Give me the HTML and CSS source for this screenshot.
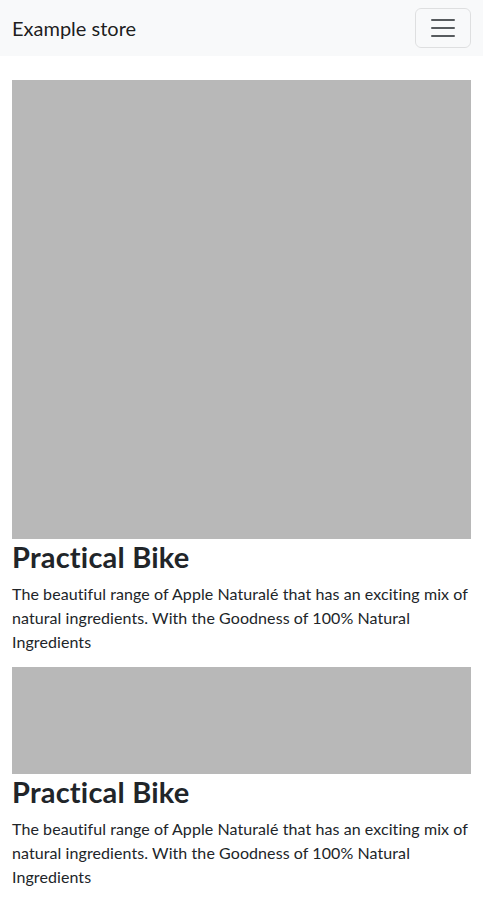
FILE: index.html
```html
<!DOCTYPE html>
<html lang="en">
<head>
<meta charset="utf-8">
<title>Example store</title>
<link rel="stylesheet" href="styles.css">
</head>
<body>
<nav class="navbar">
  <a class="brand" href="#">Example store</a>
  <button class="toggler" type="button" aria-label="Toggle navigation">
    <svg class="toggler-icon" viewBox="0 0 30 30" width="30" height="30" aria-hidden="true">
      <path d="M4 7h22M4 15h22M4 23h22" stroke="rgba(33,37,41,0.75)" stroke-width="2" stroke-linecap="round" stroke-miterlimit="10" fill="none"/>
    </svg>
  </button>
</nav>
<main class="container">
  <article class="product">
    <div class="thumb thumb-large"></div>
    <h1 class="title">Practical Bike</h1>
    <p class="desc">The beautiful range of Apple Naturalé that has an exciting mix of natural ingredients. With the Goodness of 100% Natural Ingredients</p>
  </article>
  <article class="product">
    <div class="thumb thumb-small"></div>
    <h1 class="title">Practical Bike</h1>
    <p class="desc">The beautiful range of Apple Naturalé that has an exciting mix of natural ingredients. With the Goodness of 100% Natural Ingredients</p>
  </article>
</main>
</body>
</html>
```
FILE: styles.css
```css
* { box-sizing: border-box; }
html, body { margin: 0; padding: 0; }
body {
  font-family: Lato, "Noto Sans", sans-serif;
  font-size: 16px;
  line-height: 1.5;
  color: #212529;
  background: #fff;
}
.navbar {
  height: 56px;
  background: #f8f9fa;
  display: flex;
  align-items: center;
  justify-content: space-between;
  padding: 0 12px;
}
.brand {
  font-size: 20px;
  line-height: 30px;
  color: rgba(0,0,0,0.9);
  text-decoration: none;
}
.toggler {
  width: 56px;
  height: 40px;
  padding: 0;
  display: flex;
  align-items: center;
  justify-content: center;
  background: transparent;
  border: 1px solid rgba(0,0,0,0.1);
  border-radius: 6px;
}
.toggler-icon { display: block; }
.container {
  padding: 24px 12px 0;
}
.thumb { background: #b8b8b8; width: 100%; }
.thumb-large { height: 459px; }
.thumb-small { height: 107px; }
.title {
  margin: 0 0 8px;
  font-size: 29px;
  line-height: 35px;
  font-weight: 700;
  letter-spacing: 0.2px;
}
.desc {
  margin: 0 0 13px;
  font-size: 16px;
  line-height: 24px;
  letter-spacing: 0.08px;
}
```
